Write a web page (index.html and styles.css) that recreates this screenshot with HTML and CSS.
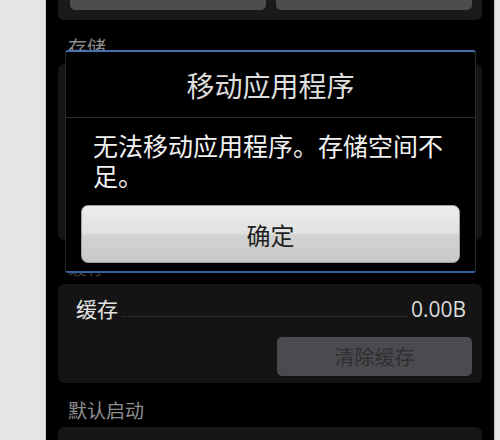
FILE: index.html
```html
<!DOCTYPE html>
<html lang="zh-CN">
<head>
<meta charset="utf-8">
<title>移动应用程序</title>
<link rel="stylesheet" href="styles.css">
</head>
<body>
<div class="screen">
  <div class="card card-top">
    <div class="top-btn"></div>
    <div class="top-btn"></div>
  </div>
  <div class="section-label">存储</div>
  <div class="card card-storage"></div>
  <div class="section-label dim">缓存</div>
  <div class="card card-cache">
    <div class="cache-row">
      <span class="cache-name">缓存</span>
      <span class="dots"></span>
      <span class="cache-size">0.00B</span>
    </div>
    <div class="cache-actions">
      <div class="clear-btn">清除缓存</div>
    </div>
  </div>
  <div class="section-label">默认启动</div>
  <div class="card card-default"></div>

  <div class="dialog">
    <div class="dialog-title">移动应用程序</div>
    <div class="dialog-msg">无法移动应用程序。存储空间不足。</div>
    <div class="dialog-btn">确定</div>
  </div>
</div>
</body>
</html>
```

FILE: styles.css
```css
html, body {
  margin: 0;
  height: 100%;
}
body {
  background: #e5e5e5;
  overflow: hidden;
  font-family: "Noto Sans CJK SC", sans-serif;
}
.screen {
  position: relative;
  margin-left: 46px;
  width: 448px;
  height: 440px;
  background: #000;
  padding: 0 12px 0 12px;
  box-sizing: border-box;
  box-shadow: -1px 0 0 #cfcfcf, 1px 0 0 #bdbdbd;
  overflow: hidden;
}
.card {
  background: #151515;
  border-radius: 6px;
}
.card-top {
  margin-top: -40px;
  height: 60px;
  box-sizing: border-box;
  display: flex;
  align-items: flex-end;
  gap: 10px;
  padding: 0 10px 10px 12px;
  background: #1a1a1a;
}
.top-btn {
  flex: 1;
  height: 40px;
  border-radius: 5px;
  background: #4d4d50;
}
.section-label {
  padding: 15px 10px 5px;
  font-size: 19px;
  line-height: 24px;
  color: #8e8e8e;
}
.section-label.dim {
  color: #3a3a3a;
}
.card-storage {
  height: 176px;
}
.card-cache {
  background: #141414;
}
.cache-row {
  display: flex;
  align-items: baseline;
  padding: 10px 16px 0 18px;
  font-size: 21px;
  line-height: 28px;
  color: #e2e2e2;
}
.dots {
  flex: 1;
  margin: 0 4px;
  border-bottom: 1px dotted #3e3e3e;
}
.cache-size {
  font-family: "Open Sans", sans-serif;
  font-size: 21px;
  color: #dcdcdc;
}
.cache-actions {
  display: flex;
  justify-content: flex-end;
  padding: 14px 10px 7px;
}
.clear-btn {
  width: 195px;
  height: 39px;
  border-radius: 5px;
  background: #4b4b4f;
  color: #2f2f31;
  font-size: 20px;
  display: flex;
  align-items: center;
  justify-content: center;
}
.card-default {
  height: 60px;
}
.dialog {
  position: absolute;
  left: 19px;
  top: 50px;
  width: 411px;
  height: 223px;
  box-sizing: border-box;
  background: #000;
  border-top: 2px solid #4a72b2;
  border-bottom: 2px solid #34609e;
  border-left: 1px solid #262626;
  border-right: 1px solid #2a2a2a;
  border-radius: 3px;
  display: flex;
  flex-direction: column;
}
.dialog-title {
  height: 65px;
  display: flex;
  align-items: center;
  justify-content: center;
  font-size: 28px;
  color: #dedede;
  border-bottom: 1px solid #2c2c2c;
}
.dialog-msg {
  padding: 12px 30px 0 27px;
  font-size: 25px;
  line-height: 30px;
  color: #f2f2f2;
}
.dialog-btn {
  margin: 15px 15px 0;
  height: 58px;
  box-sizing: border-box;
  border: 1px solid #a0a0a0;
  border-radius: 7px;
  background: linear-gradient(#ededed 0%, #e1e1e1 48%, #d3d3d3 52%, #c8c8c8 100%);
  display: flex;
  align-items: center;
  justify-content: center;
  font-size: 24px;
  color: #1e1e1e;
}
```
